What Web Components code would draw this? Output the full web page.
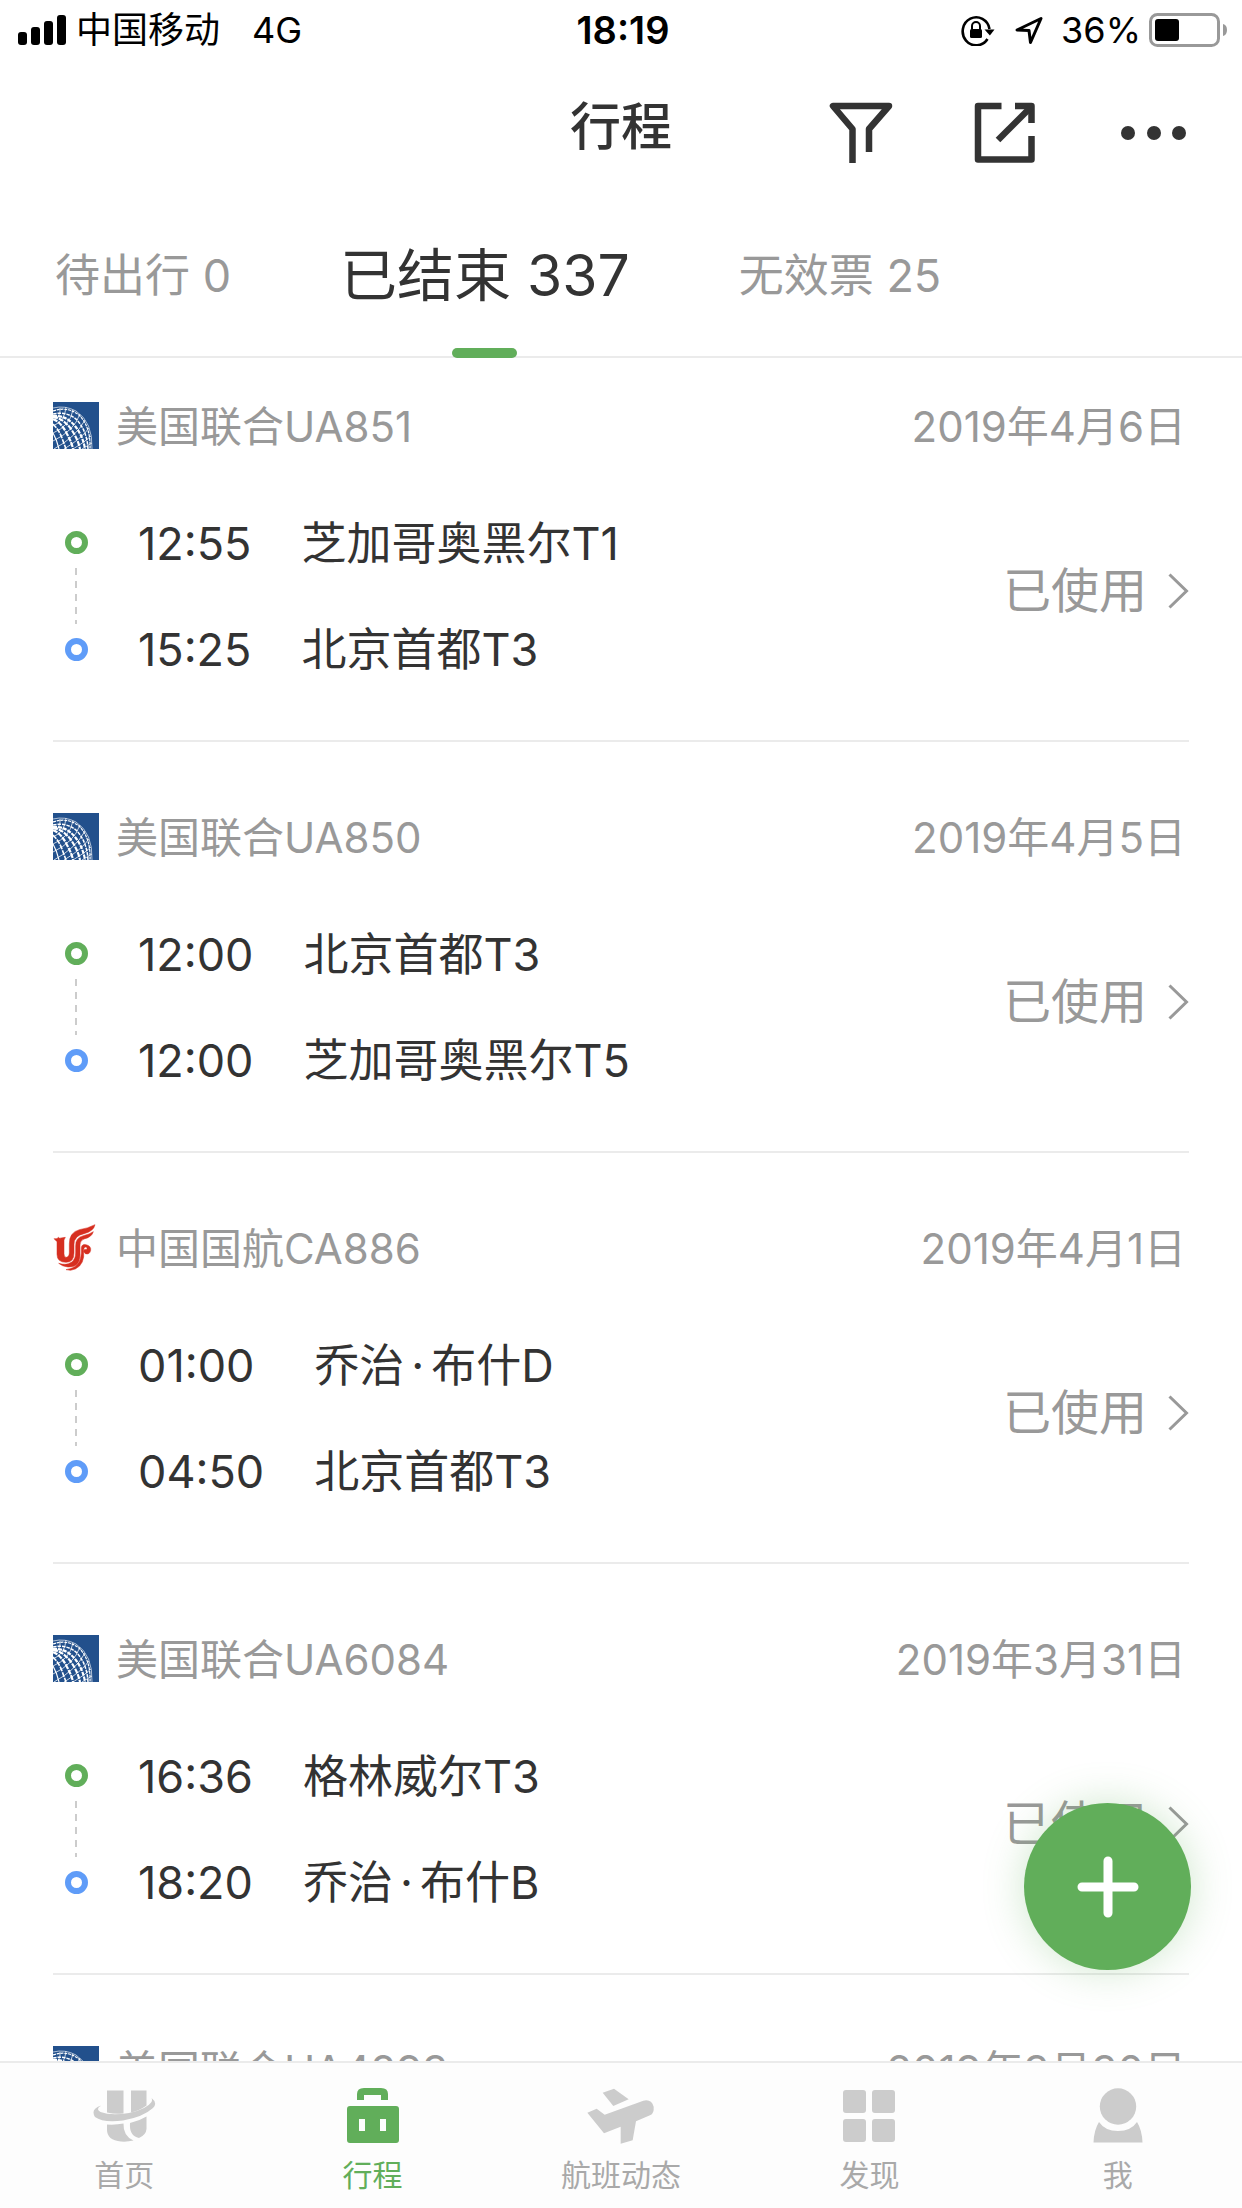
<!DOCTYPE html>
<html lang="zh-CN">
<head>
<meta charset="utf-8">
<meta name="viewport" content="width=device-width">
<title>行程</title>
<style>
  body { margin: 0; background: #fff; color: #333; font-family: Inter, "Noto Sans CJK SC", sans-serif; }
</style>
</head>
<body>
<trip-app></trip-app>

<template id="t-app">
  <style>
    :host { display: flex; flex-direction: column; height: 100vh; }
    main { flex: 1; min-height: 0; overflow: hidden; position: relative; }
    add-button { position: absolute; right: 51px; bottom: 91px; }
    .dot { margin: 0 7px; }
  </style>
  <status-bar></status-bar>
  <title-bar>行程</title-bar>
  <trip-tabs>
    <tab-button>待出行 0</tab-button>
    <tab-button active>已结束 337</tab-button>
    <tab-button>无效票 25</tab-button>
  </trip-tabs>
  <main>
    <flight-card airline="ua" dep="12:55" arr="15:25">美国联合UA851<span slot="date">2019年4月6日</span><span slot="from">芝加哥奥黑尔T1</span><span slot="to">北京首都T3</span></flight-card>
    <flight-card airline="ua" dep="12:00" arr="12:00">美国联合UA850<span slot="date">2019年4月5日</span><span slot="from">北京首都T3</span><span slot="to">芝加哥奥黑尔T5</span></flight-card>
    <flight-card airline="ca" dep="01:00" arr="04:50">中国国航CA886<span slot="date">2019年4月1日</span><span slot="from">乔治<span class="dot">·</span>布什D</span><span slot="to">北京首都T3</span></flight-card>
    <flight-card airline="ua" dep="16:36" arr="18:20">美国联合UA6084<span slot="date">2019年3月31日</span><span slot="from">格林威尔T3</span><span slot="to">乔治<span class="dot">·</span>布什B</span></flight-card>
    <flight-card airline="ua">美国联合UA4293<span slot="date">2019年3月30日</span></flight-card>
    <add-button></add-button>
  </main>
  <bottom-nav></bottom-nav>
</template>

<template id="t-status">
  <style>
    :host { display: grid; grid-template-columns: 1fr auto 1fr; align-items: center; height: 60px; padding: 0 14px 0 18px; color: #000; font-size: 36px; line-height: 46px; }
    .l, .r { display: flex; align-items: center; }
    .r { justify-content: flex-end; }
    .net { margin-left: 32px; }
    .car { margin-left: 10px; }
    b { font-size: 38px; font-weight: 600; }
    svg { display: block; }
    .loc { margin: 0 18px 0 20px; }
    .bat { margin-left: 8px; }
  </style>
  <div class="l">
    <svg width="48" height="30" viewBox="0 0 48 30" aria-hidden="true"><rect y="17" width="9" height="13" rx="3"/><rect x="13" y="12" width="9" height="18" rx="3"/><rect x="26" y="6" width="9" height="24" rx="3"/><rect x="39" width="9" height="30" rx="3"/></svg>
    <span class="car">中国移动</span><span class="net">4G</span>
  </div>
  <b>18:19</b>
  <div class="r">
    <svg width="34" height="31" viewBox="0 0 34 31" aria-hidden="true">
      <path d="M26.5 24 A13.5 14 0 1 1 28.5 14" fill="none" stroke="#000" stroke-width="2.6"/>
      <path d="M23.500 14.500h10l-4.600 6z"/>
      <rect x="9" y="14" width="12" height="9" rx="1.500"/>
      <path d="M11 14.500V11a4 4 0 0 1 8 0v3.500" fill="none" stroke="#000" stroke-width="2"/>
    </svg>
    <svg class="loc" width="28" height="29" viewBox="0 0 28 29" aria-hidden="true"><path d="M2 14 L26 2.500 L15.500 26.500 L14 14.500 Z" fill="none" stroke="#000" stroke-width="3" stroke-linejoin="round"/></svg>
    <span>36%</span>
    <svg class="bat" width="79" height="34" viewBox="0 0 79 34" aria-hidden="true"><rect x="1.500" y="1.500" width="68" height="31" rx="7" fill="none" stroke="#999" stroke-width="3"/><rect x="6" y="6" width="24" height="22" rx="3"/><path d="M74 11q4 1 4 6t-4 6z" fill="#999"/></svg>
  </div>
</template>

<template id="t-title">
  <style>
    :host { display: grid; grid-template-columns: 1fr auto 1fr; align-items: center; height: 132px; padding: 0 52px; }
    h1 { margin: 0; padding-top: 2px; font-size: 51px; line-height: 72px; font-weight: 500; }
    .acts { display: flex; align-items: center; justify-content: flex-end; gap: 78px; padding: 14px 4px 0 0; }
    button { display: block; padding: 0; border: 0; background: none; color: #333; }
    svg { display: block; }
  </style>
  <span></span>
  <h1><slot></slot></h1>
  <div class="acts">
    <button aria-label="筛选"><svg width="70" height="62" viewBox="0 0 70 62"><path d="M26.500 61V27L7 4H63L43 27V50" fill="none" stroke="#333" stroke-width="6.500" stroke-linejoin="round"/></svg></button>
    <button aria-label="分享"><svg width="62" height="62" viewBox="0 0 62 62"><path d="M27.500 4H4V57.500H57.500V34M41 4H57.500V21" fill="none" stroke="#333" stroke-width="6.500" stroke-linejoin="round"/><path d="M56 6 24 38" stroke="#333" stroke-width="6.500"/></svg></button>
    <button aria-label="更多"><svg width="72" height="16" viewBox="0 0 72 16" fill="#333"><circle cx="14" cy="8" r="7"/><circle cx="40" cy="8" r="7"/><circle cx="65" cy="8" r="7"/></svg></button>
  </div>
</template>

<template id="t-tabs">
  <style>
    :host { display: flex; align-items: stretch; gap: 109px; height: 164px; padding: 0 55px; border-bottom: 2px solid #ebebeb; }
  </style>
  <slot></slot>
</template>

<template id="t-tab">
  <style>
    :host { display: block; height: 166px; }
    button { display: grid; grid-template-rows: 156px 10px; justify-items: center; align-items: center; height: 166px; padding: 0; border: 0; background: none; color: #999; font: inherit; font-size: 45px; line-height: 64px; white-space: nowrap; }
    span { padding-top: 12px; }
    :host([active]) button { color: #333; font-size: 57px; line-height: 80px; }
    :host([active]) button::after { content: ""; width: 65px; height: 10px; border-radius: 5px; background: #61ae5a; }
  </style>
  <button><span><slot></slot></span></button>
</template>

<template id="t-card">
  <style>
    :host { display: block; margin: 0 53px; padding: 71px 0 64px; border-bottom: 2px solid #ebebeb; }
    :host(:first-of-type) { padding-top: 44px; }
    header { display: flex; align-items: flex-start; height: 47px; color: #999; font-size: 42px; line-height: 49px; }
    .name { flex: 1; margin-left: 17px; }
    .date { margin-right: 3px; }
    .body { display: flex; align-items: center; margin-top: 67px; }
    .route { flex: 1; display: grid; grid-template-columns: 46px auto 1fr; grid-template-rows: 54px 54px; row-gap: 52px; font-size: 45px; line-height: 56px; }
    .rail { grid-row: 1 / 3; display: flex; flex-direction: column; align-items: center; justify-content: space-between; padding: 15px 0; }
    i { width: 11px; height: 11px; border: 6px solid #61ae5a; border-radius: 50%; }
    .to { border-color: #5f9cf8; }
    .dash { flex: 1; width: 2px; margin: 14px 0; background: repeating-linear-gradient(#ccc 0 7px, transparent 7px 13px); }
    .time { margin: 0 50px 0 39px; }
    a { display: flex; align-items: center; gap: 21px; padding-bottom: 10px; color: #999; font-size: 48px; line-height: 60px; text-decoration: none; }
    svg { display: block; }
  </style>
  <header><airline-logo></airline-logo><span class="name"><slot></slot></span><span class="date"><slot name="date"></slot></span></header>
  <div class="body">
    <div class="route">
      <div class="rail"><i></i><span class="dash"></span><i class="to"></i></div>
      <span class="time" id="dep"></span><slot name="from"></slot>
      <span class="time" id="arr"></span><slot name="to"></slot>
    </div>
    <a href="#">已使用 <svg width="21" height="36" viewBox="0 0 21 36" aria-hidden="true"><path d="M1.500 1.500 18.500 18 1.500 34.500" fill="none" stroke="#999" stroke-width="3"/></svg></a>
  </div>
</template>

<template id="t-add">
  <style>
    :host { display: block; }
    button { display: grid; place-items: center; width: 167px; height: 167px; padding: 0; border: 0; border-radius: 50%; background: #61ae5a; box-shadow: 0 0 42px rgba(97,174,90,.3); }
  </style>
  <button aria-label="添加行程"><svg width="62" height="62" viewBox="0 0 62 62"><path d="M31 5V57M5 31H57" stroke="#fff" stroke-width="9" stroke-linecap="round"/></svg></button>
</template>

<template id="t-nav">
  <style>
    :host { display: block; border-top: 2px solid #ebebeb; background: #fdfdfd; }
    nav { display: grid; grid-template-columns: repeat(5, 1fr); height: 145px; }
    a { display: flex; flex-direction: column; align-items: center; gap: 10px; padding-top: 24px; color: #a9a9a9; font-size: 30px; line-height: 40px; text-decoration: none; }
    a[aria-current] { color: #61ae5a; }
    svg { display: block; fill: #ccc; }
    a[aria-current] svg { fill: #61ae5a; }
  </style>
  <nav>
    <a href="#"><svg width="66" height="58" viewBox="0 0 66 58" aria-hidden="true">
      <path d="M16 3.500h16.500V26.500Q24 27.500 16 25.500zM40 3.500h15.500V18.500Q48 24 40 25.500z"/>
      <path d="M10.400 18.500Q4 22 9.500 25Q20 29 38 26Q56 22 60.500 15Q61.500 13 60.500 11Q67 16 62 21Q52 30 32 33.500Q12 36 4 30Q-1 22 10.400 18.500z"/>
      <path d="M16 37.500Q25 38 32.500 36.500Q32 49 42.500 53.500Q36 55 30 54.500Q16 53 16 43z"/>
      <path d="M39 36Q48 34 55.500 29.500V42Q55 48 48 51Q38 49 39 36z"/></svg><span>首页</span></a>
    <a href="#" aria-current="page"><svg width="52" height="58" viewBox="0 0 52 58" aria-hidden="true"><path fill-rule="evenodd" d="M3 19H49Q52 19 52 22V53Q52 56 49 56H3Q0 56 0 53V22Q0 19 3 19zM12 32V44H18V32zM33 32V44H39V32z"/><path d="M10 13V7Q10 1 17 1H34Q41 1 41 7V13H34V8H17V13z"/></svg><span>行程</span></a>
    <a href="#"><svg width="80" height="58" viewBox="3 33 240 174" aria-hidden="true"><path d="M68 50 102 38 146 70 100 90Z"/><path d="M22 110 50 98 74 116 190 74Q214 68 221 92Q223 112 210 118L168 136 158 193 122 203V152L72 172Z"/></svg><span>航班动态</span></a>
    <a href="#"><svg width="52" height="58" viewBox="0 0 52 58" aria-hidden="true"><rect y="3" width="23" height="23" rx="3"/><rect x="29" y="3" width="23" height="23" rx="3"/><rect y="32" width="23" height="23" rx="3"/><rect x="29" y="32" width="23" height="23" rx="3"/></svg><span>发现</span></a>
    <a href="#"><svg width="50" height="58" viewBox="0 0 50 58" aria-hidden="true"><circle cx="25" cy="19.500" r="18.200"/><path d="M6 35Q12 44 25 44Q38 44 44 35Q49 43 49.500 55.500H.5Q1 43 6 35z"/></svg><span>我</span></a>
  </nav>
</template>

<template id="t-logo-ua">
  <svg width="46" height="47" viewBox="0 0 46 47" aria-hidden="true">
    <rect width="46" height="47" fill="#22508c"/>
    <g fill="none" stroke="#fff">
      <path stroke-width=".8" opacity=".8" d="M0 6Q12 3 23 9Q40 20 39 47"/>
      <path stroke-width="1.200" stroke-dasharray="3 .8" d="M0 9Q14 4 26 13Q38 25 37 47"/>
      <path stroke-width="1.500" stroke-dasharray="3.500 1" d="M0 12Q14 9 24 18Q34 29 35 47"/>
      <path stroke-width="2.200" stroke-dasharray="4 1" d="M0 14Q13 13 22 24Q30 34 32 47"/>
      <path stroke-width="2.200" stroke-dasharray="5 1" d="M0 15Q10 16 18 27Q25 37 27 47"/>
      <path stroke-width="2.200" stroke-dasharray="5 1" d="M0 17Q8 20 14 32Q19 41 20 47"/>
      <path stroke-width="1.600" stroke-dasharray="5 1" d="M0 22Q6 28 9 36L13 47"/>
      <path stroke-width="1.200" d="M0 31Q4 38 6 47"/>
      <g stroke-width=".9" opacity=".85">
        <path d="M0 18Q8 15 7 6M0 24Q12 19 13 5M0 31Q17 24 20 8M0 39Q21 29 27 12M1 47Q23 35 32 18M11 47Q28 37 36 26M20 47Q32 40 38 34M29 47 39 41"/>
      </g>
    </g>
  </svg>
</template>

<template id="t-logo-ca">
  <svg width="46" height="47" viewBox="39 41 138 141" aria-hidden="true">
    <g fill="#d62f20" stroke="#d62f20" stroke-width="1.500">
      <path d="M42 85Q50 87 56 81Q58 85 63 83L76 81 72 89V130Q72 141 79 141Q88 140 88 126V100Q88 66 118 58Q144 54 165 43Q161 63 132 70Q102 76 102 102V128Q102 156 78 156Q51 156 51 132V94Z"/>
      <path d="M160 64Q156 80 132 86Q120 90 120 104V134Q119 172 84 170Q66 168 56 159Q80 166 94 156Q107 147 107 128V106Q106 82 130 76Q148 72 160 64Z"/>
      <path d="M124 128V112Q126 100 138 103Q154 107 152 120Q149 134 136 130Q128 124 134 117Q144 120 140 111Q132 108 131 118V140Q126 174 92 180L78 178Q122 172 124 128Z"/>
    </g>
  </svg>
</template>

<script>
  const stamp = (host, id) => {
    const root = host.attachShadow({ mode: 'open' });
    root.append(document.getElementById(id).content.cloneNode(true));
    return root;
  };
  const simple = (tag, id) => customElements.define(tag, class extends HTMLElement {
    constructor() { super(); stamp(this, id); }
  });

  class AirlineLogo extends HTMLElement {
    static observedAttributes = ['code'];
    constructor() { super(); this.attachShadow({ mode: 'open' }); }
    attributeChangedCallback(name, old, code) {
      const style = document.createElement('style');
      style.textContent = ':host, svg { display: block; }';
      this.shadowRoot.replaceChildren(style, document.getElementById('t-logo-' + code).content.cloneNode(true));
    }
  }
  customElements.define('airline-logo', AirlineLogo);

  class FlightCard extends HTMLElement {
    connectedCallback() {
      if (this.shadowRoot) return;
      const root = stamp(this, 't-card');
      root.querySelector('airline-logo').setAttribute('code', this.getAttribute('airline'));
      if (!this.hasAttribute('dep')) {
        root.querySelector('.body').remove();
        return;
      }
      root.getElementById('dep').textContent = this.getAttribute('dep');
      root.getElementById('arr').textContent = this.getAttribute('arr');
    }
  }
  customElements.define('flight-card', FlightCard);

  simple('status-bar', 't-status');
  simple('title-bar', 't-title');
  simple('tab-button', 't-tab');
  simple('trip-tabs', 't-tabs');
  simple('add-button', 't-add');
  simple('bottom-nav', 't-nav');
  simple('trip-app', 't-app');
</script>
</body>
</html>
